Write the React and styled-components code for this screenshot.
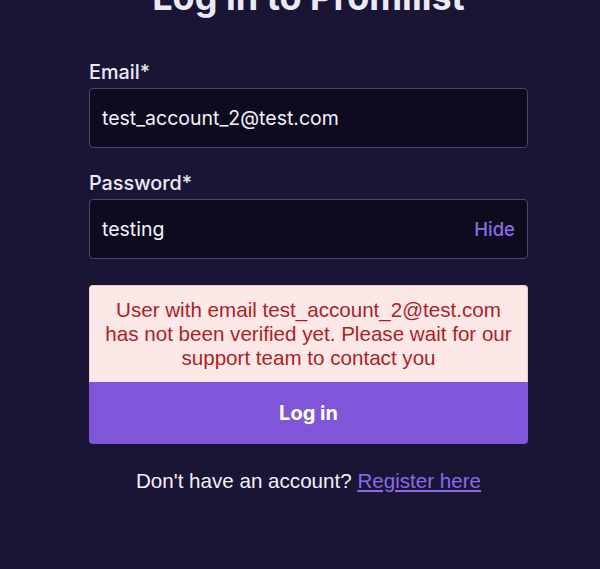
import React, { useState } from "react";
import styled, { createGlobalStyle } from "styled-components";

const GlobalStyle = createGlobalStyle`
  html, body {
    margin: 0;
    padding: 0;
    background: #1a1535;
    font-family: Inter, "Noto Sans", sans-serif;
    overflow: hidden;
  }
`;

const Page = styled.div`
  min-height: 569px;
  background: #1a1535;
  color: #f3f1fa;
`;

const Form = styled.form`
  width: 439px;
  margin: -24px 0 0 89px;
  display: flex;
  flex-direction: column;
`;

const Title = styled.h1`
  margin: 0 -40px;
  font-size: 36px;
  line-height: 43px;
  font-weight: 700;
  text-align: center;
  color: #ece9f6;
`;

const Field = styled.div`
  display: flex;
  flex-direction: column;
  gap: 4px;
  margin-top: ${(p) => p.$top}px;
`;

const Label = styled.label`
  font-size: 19.8px;
  line-height: 24px;
  font-weight: 500;
  color: #ece9f6;
`;

const InputWrap = styled.div`
  display: flex;
  align-items: center;
  height: 60px;
  box-sizing: border-box;
  border: 1px solid #4a4570;
  border-radius: 4px;
  background: #0e0b1f;
  padding: 0 12px 0 12px;
`;

const Input = styled.input`
  flex: 1;
  min-width: 0;
  border: none;
  outline: none;
  background: transparent;
  color: #f3f1fa;
  font-family: Inter, sans-serif;
  font-size: 19.5px;
  padding: 0;
`;

const Toggle = styled.button`
  border: none;
  background: none;
  padding: 0;
  color: #8b6be6;
  font-family: Inter, sans-serif;
  font-size: 18.5px;
  font-weight: 500;
  cursor: pointer;
`;

const ErrorBox = styled.div`
  margin-top: 26px;
  padding: 12px 11px;
  background: #fde8e8;
  border: 1px solid #f3c9cb;
  border-bottom: none;
  border-radius: 4px 4px 0 0;
  color: #ad1f26;
  font-family: "Liberation Sans", Arial, sans-serif;
  font-size: 20.6px;
  line-height: 24px;
  text-align: center;
`;

const Submit = styled.button`
  height: 62px;
  border: none;
  border-radius: 0 0 4px 4px;
  background: #7f56d9;
  color: #ffffff;
  font-family: Inter, sans-serif;
  font-size: 20px;
  font-weight: 700;
  cursor: pointer;
`;

const Footer = styled.p`
  margin: 25px 0 0;
  text-align: center;
  font-family: "Liberation Sans", Arial, sans-serif;
  font-size: 20.6px;
  line-height: 24px;
  color: #f3f1fa;
`;

const RegisterLink = styled.a`
  color: #8b6be6;
  text-decoration: underline;
`;

export default function App() {
  const [email, setEmail] = useState("test_account_2@test.com");
  const [password, setPassword] = useState("testing");
  const [shown, setShown] = useState(true);

  return (
    <Page>
      <GlobalStyle />
      <Form onSubmit={(e) => e.preventDefault()}>
        <Title>Log in to Promilist</Title>
        <Field $top={41}>
          <Label>Email*</Label>
          <InputWrap>
            <Input value={email} onChange={(e) => setEmail(e.target.value)} />
          </InputWrap>
        </Field>
        <Field $top={23}>
          <Label>Password*</Label>
          <InputWrap>
            <Input
              type={shown ? "text" : "password"}
              value={password}
              onChange={(e) => setPassword(e.target.value)}
            />
            <Toggle type="button" onClick={() => setShown(!shown)}>
              {shown ? "Hide" : "Show"}
            </Toggle>
          </InputWrap>
        </Field>
        <ErrorBox>
          User with email test_account_2@test.com has not been verified yet.
          Please wait for our support team to contact you
        </ErrorBox>
        <Submit type="submit">Log in</Submit>
        <Footer>
          Don't have an account? <RegisterLink href="#">Register here</RegisterLink>
        </Footer>
      </Form>
    </Page>
  );
}
